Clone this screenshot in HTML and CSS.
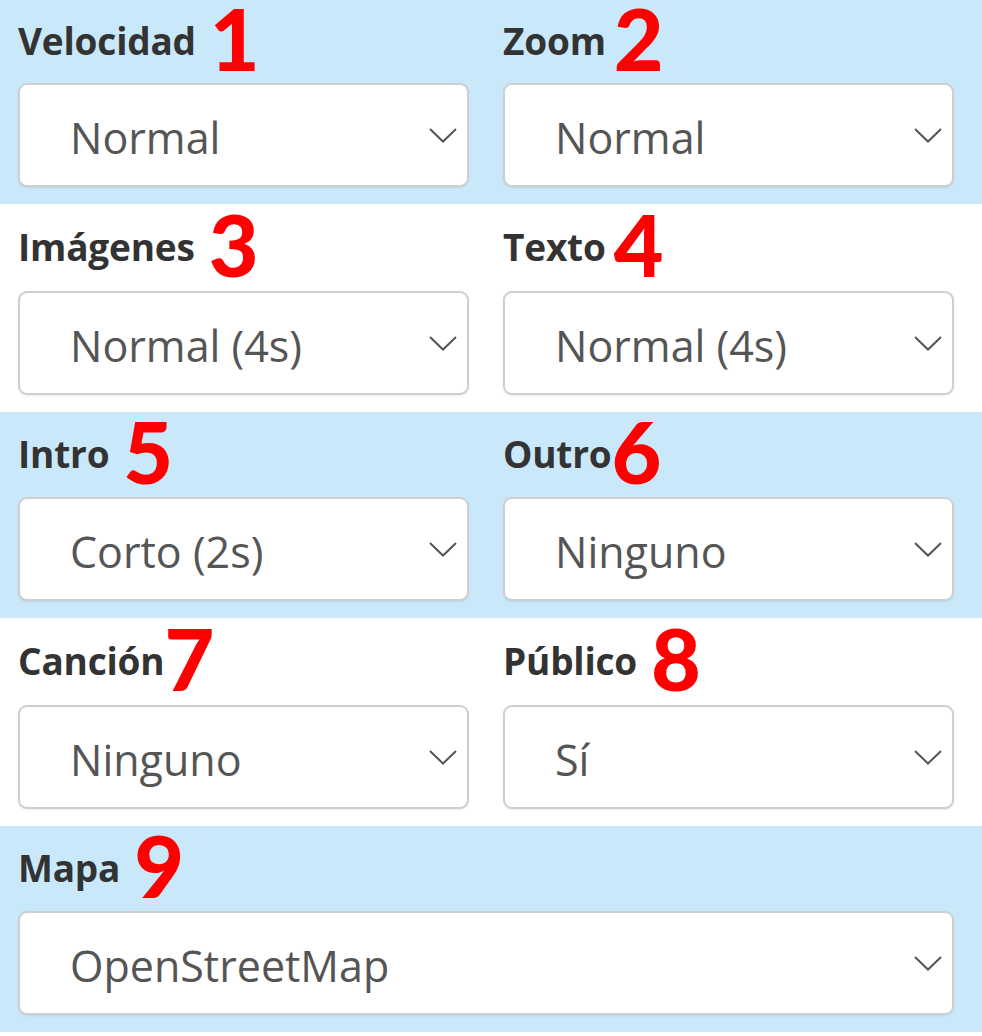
FILE: index.html
```html
<!DOCTYPE html>
<html lang="es">
<head>
<meta charset="utf-8">
<title>Opciones</title>
<link rel="stylesheet" href="styles.css">
</head>
<body>
<div class="form">
  <div class="row row-blue row-first">
    <div class="field">
      <div class="head"><span class="label">Velocidad</span><span class="num n1">1</span></div>
      <div class="select"><span class="value">Normal</span><svg class="chev" viewBox="0 0 28 15"><path d="M1 1 L14 13.5 L27 1"/></svg></div>
    </div>
    <div class="field">
      <div class="head"><span class="label">Zoom</span><span class="num n2">2</span></div>
      <div class="select"><span class="value">Normal</span><svg class="chev" viewBox="0 0 28 15"><path d="M1 1 L14 13.5 L27 1"/></svg></div>
    </div>
  </div>
  <div class="row row-white">
    <div class="field">
      <div class="head"><span class="label">Imágenes</span><span class="num n3">3</span></div>
      <div class="select"><span class="value">Normal (4s)</span><svg class="chev" viewBox="0 0 28 15"><path d="M1 1 L14 13.5 L27 1"/></svg></div>
    </div>
    <div class="field">
      <div class="head"><span class="label">Texto</span><span class="num n4">4</span></div>
      <div class="select"><span class="value">Normal (4s)</span><svg class="chev" viewBox="0 0 28 15"><path d="M1 1 L14 13.5 L27 1"/></svg></div>
    </div>
  </div>
  <div class="row row-blue">
    <div class="field">
      <div class="head"><span class="label">Intro</span><span class="num n5">5</span></div>
      <div class="select"><span class="value">Corto (2s)</span><svg class="chev" viewBox="0 0 28 15"><path d="M1 1 L14 13.5 L27 1"/></svg></div>
    </div>
    <div class="field">
      <div class="head"><span class="label">Outro</span><span class="num n6">6</span></div>
      <div class="select"><span class="value">Ninguno</span><svg class="chev" viewBox="0 0 28 15"><path d="M1 1 L14 13.5 L27 1"/></svg></div>
    </div>
  </div>
  <div class="row row-white">
    <div class="field">
      <div class="head"><span class="label">Canción</span><span class="num n7">7</span></div>
      <div class="select"><span class="value">Ninguno</span><svg class="chev" viewBox="0 0 28 15"><path d="M1 1 L14 13.5 L27 1"/></svg></div>
    </div>
    <div class="field">
      <div class="head"><span class="label">Público</span><span class="num n8">8</span></div>
      <div class="select"><span class="value">Sí</span><svg class="chev" viewBox="0 0 28 15"><path d="M1 1 L14 13.5 L27 1"/></svg></div>
    </div>
  </div>
  <div class="row row-blue row-single">
    <div class="field">
      <div class="head"><span class="label">Mapa</span><span class="num n9">9</span></div>
      <div class="select"><span class="value">OpenStreetMap</span><svg class="chev" viewBox="0 0 28 15"><path d="M1 1 L14 13.5 L27 1"/></svg></div>
    </div>
  </div>
</div>
</body>
</html>
```

FILE: styles.css
```css
* { box-sizing: border-box; }
html, body { margin: 0; padding: 0; background: #ffffff; }
body { width: 982px; height: 1036px; overflow: hidden; font-family: "Open Sans", "Liberation Sans", sans-serif; }

.form { display: flex; flex-direction: column; }

.row {
  display: grid;
  grid-template-columns: 451px 451px;
  column-gap: 34px;
  padding: 0 28px 17px 18px;
}
.row-single { grid-template-columns: 936px; }
.row-blue { background: #c9e8f9; }
.row-white { background: #ffffff; }

.head {
  height: 85px;
  display: flex;
  align-items: center;
}
.row-first .head { height: 83px; }
.row-white .head { height: 87px; }

.label {
  font-family: "Open Sans", sans-serif;
  font-weight: 700;
  font-size: 37px;
  line-height: 1;
  color: #333333;
  letter-spacing: -0.2px;
  padding-bottom: 2px;
}
.num {
  font-family: Lato, "Liberation Sans", sans-serif;
  font-weight: 900;
  font-size: 86px;
  line-height: 0.8;
  color: #ff0000;
  margin-left: 14px;
  padding-bottom: 6px;
}
.n6, .n7 { margin-left: 0; }
.n2, .n4 { margin-left: 8px; }

.select {
  height: 104px;
  background: #ffffff;
  border: 2px solid #cfcfcf;
  border-radius: 9px;
  box-shadow: 0 1px 2px rgba(0,0,0,0.08);
  display: flex;
  align-items: center;
  justify-content: space-between;
  padding: 0 10px 0 50px;
}
.value {
  font-family: "Open Sans", sans-serif;
  font-size: 43px;
  line-height: 1;
  color: #555555;
  padding-top: 4px;
}
.chev {
  width: 28px;
  height: 15px;
  fill: none;
  stroke: #555555;
  stroke-width: 2;
}
```
